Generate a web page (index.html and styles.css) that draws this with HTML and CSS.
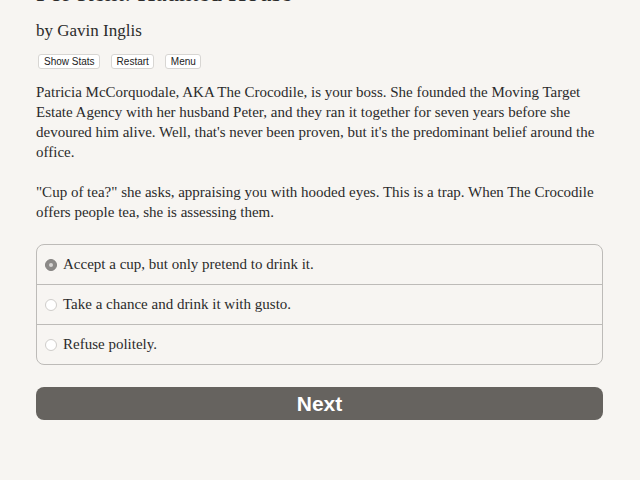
FILE: index.html
```html
<!DOCTYPE html>
<html lang="en">
<head>
    <meta charset="UTF-8">
    <title>For Rent: Haunted House</title>
    <link rel="stylesheet" href="styles.css">
</head>
<body>
    <div class="container">
        <div class="header">
            <h1 class="gameTitle">For Rent: Haunted House</h1>
            <h2 class="author">by Gavin Inglis</h2>
            <div class="buttons">
                <button class="spacedLink">Show Stats</button>
                <button class="spacedLink">Restart</button>
                <button class="spacedLink">Menu</button>
            </div>
        </div>

        <div class="text">
            <p>Patricia McCorquodale, AKA The Crocodile, is your boss. She founded the Moving Target Estate Agency with her husband Peter, and they ran it together for seven years before she devoured him alive. Well, that's never been proven, but it's the predominant belief around the office.</p>
            <p>"Cup of tea?" she asks, appraising you with hooded eyes. This is a trap. When The Crocodile offers people tea, she is assessing them.</p>
        </div>

        <form class="choice">
            <label class="choiceRow"><input type="radio" name="choice" checked> Accept a cup, but only pretend to drink it.</label>
            <label class="choiceRow"><input type="radio" name="choice"> Take a chance and drink it with gusto.</label>
            <label class="choiceRow"><input type="radio" name="choice"> Refuse politely.</label>
        </form>

        <button class="next">Next</button>
    </div>
</body>
</html>
```

FILE: styles.css
```css
/* page */
body {
    margin: 0;
    background-color: #f7f5f2;
    color: #2b2b2b;
    font-family: "Liberation Serif", "DejaVu Serif", serif;
}

.container {
    width: 567px;
    margin: -22px 0 0 36px;
}

/* header */
.gameTitle {
    font-size: 25px;
    font-weight: normal;
    margin: 0;
    line-height: 30px;
}

.author {
    font-size: 17px;
    font-weight: normal;
    margin: 11px 0 0 0;
    line-height: 24px;
}

.buttons {
    display: flex;
    gap: 11px;
    margin: 11px 0 0 2px;
}

.spacedLink {
    font-family: "Liberation Sans", Arial, sans-serif;
    font-size: 10px;
    color: #222;
    background: #fff;
    border: 1px solid #d8d6d3;
    border-radius: 3px;
    padding: 0 4px 0 5px;
    height: 15px;
    line-height: 13px;
}

/* story text */
.text {
    font-size: 15px;
    line-height: 20px;
    margin-top: 13px;
}

.text p {
    margin: 0 0 20px 0;
}

/* choices */
.choice {
    border: 1px solid #bdbbb8;
    border-radius: 8px;
    margin-top: 22px;
}

.choiceRow {
    display: flex;
    align-items: center;
    height: 39px;
    font-size: 15px;
    padding-left: 8px;
    border-top: 1px solid #bdbbb8;
}

.choiceRow:first-child {
    border-top: none;
}

/* round radio, grey when picked */
.choiceRow input {
    appearance: none;
    margin: 0 6px 0 0;
    width: 12px;
    height: 12px;
    border: 1px solid #cfcdca;
    border-radius: 50%;
    background: #fff;
    position: relative;
}

.choiceRow input:checked {
    background: #8c8a88;
    border-color: #858381;
}

.choiceRow input:checked::after {
    content: '';
    position: absolute;
    left: 3px;
    top: 3px;
    width: 4px;
    height: 4px;
    border-radius: 50%;
    background: #d8d6d4;
}

/* next button */
.next {
    display: block;
    width: 100%;
    height: 33px;
    margin-top: 22px;
    background: #66635f;
    color: #fff;
    border: none;
    border-radius: 8px;
    font-family: "Liberation Sans", Arial, sans-serif;
    font-weight: bold;
    font-size: 21px;
}
```
